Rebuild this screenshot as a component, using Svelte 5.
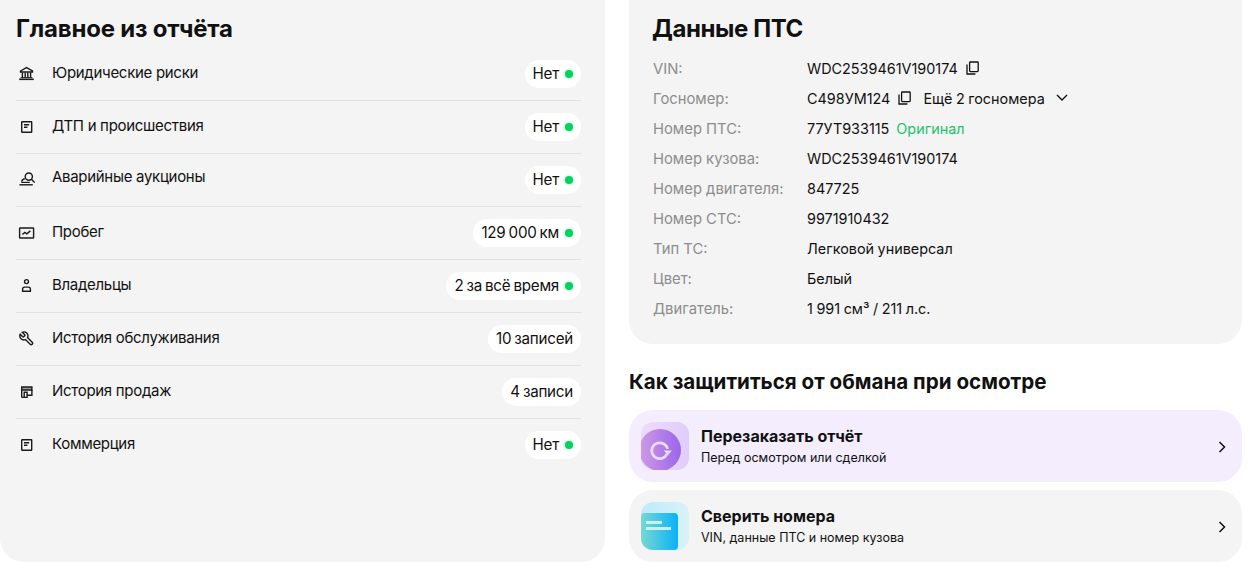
<script>
	const rows = [
		{ icon: 'bank', label: 'Юридические риски', value: 'Нет', dot: true },
		{ icon: 'doc', label: 'ДТП и происшествия', value: 'Нет', dot: true },
		{ icon: 'gavel', label: 'Аварийные аукционы', value: 'Нет', dot: true, lift: true },
		{ icon: 'chart', label: 'Пробег', value: '129 000 км', dot: true },
		{ icon: 'user', label: 'Владельцы', value: '2 за всё время', dot: true },
		{ icon: 'wrench', label: 'История обслуживания', value: '10 записей', dot: false },
		{ icon: 'shop', label: 'История продаж', value: '4 записи', dot: false },
		{ icon: 'doc', label: 'Коммерция', value: 'Нет', dot: true }
	];

	const specs = [
		['VIN:', 'WDC2539461V190174'],
		['Госномер:', 'С498УМ124'],
		['Номер ПТС:', '77УТ933115'],
		['Номер кузова:', 'WDC2539461V190174'],
		['Номер двигателя:', '847725'],
		['Номер СТС:', '9971910432'],
		['Тип ТС:', 'Легковой универсал'],
		['Цвет:', 'Белый'],
		['Двигатель:', '1 991 см³ / 211 л.с.']
	];
</script>

{#snippet copyIcon()}
	<svg class="copy" width="13" height="14" viewBox="0 0 13 14" fill="none" stroke="#111" stroke-width="1.3">
		<rect x="3.6" y="1" width="8.6" height="9.6" rx="0.8" />
		<path d="M1 3.5V13h8.4" />
	</svg>
{/snippet}

{#snippet rowIcon(name)}
	<svg width="17" height="16" viewBox="0 0 17 16" fill="none" stroke="#1a1a1a" stroke-width="1.4">
		{#if name === 'bank'}
			<path d="M2.5 5 8.5 1.6l6 3.4v1h-12z" />
			<path d="M4.4 6.5v4.8M7.2 6.5v4.8M9.8 6.5v4.8M12.6 6.5v4.8" />
			<path d="M2.6 11.6h11.8" stroke-width="1" />
			<path d="M1.2 13.3h14.6" stroke-width="1.6" />
		{:else if name === 'doc'}
			<rect x="3.7" y="2.7" width="10" height="10.6" rx="0.5" />
			<path d="M6 5.8h5.2M6 8.2h3.4" />
		{:else if name === 'gavel'}
			<circle cx="10.8" cy="5.6" r="3.6" />
			<path d="M13.4 8.2l3.2 3.4" />
			<path d="M3.8 10.8c0-1.8 1.2-2.8 3-3" />
			<path d="M3.4 11.4h8.4" stroke-width="1.2" />
			<path d="M1.4 13.8h13.4" stroke-width="1.4" />
		{:else if name === 'chart'}
			<rect x="1.6" y="3" width="14" height="10" rx="0.5" />
			<path d="M4.4 9.6 6.8 7.4l2 1.4 3.6-2.9" />
		{:else if name === 'user'}
			<circle cx="8.5" cy="3.6" r="2" />
			<path d="M4.6 13.3v-2.2c0-1.1.8-2 2-2h3.8c1.2 0 2 .9 2 2v2.2z" />
		{:else if name === 'wrench'}
			<g transform="translate(16.6 -.4) scale(-.67 .67)" stroke-width="2.1">
				<path d="M14.7 6.3a1 1 0 0 0 0 1.4l1.6 1.6a1 1 0 0 0 1.4 0l3.77-3.77a6 6 0 0 1-7.94 7.94l-6.91 6.91a2.12 2.12 0 0 1-3-3l6.91-6.91a6 6 0 0 1 7.94-7.94l-3.76 3.76z" />
			</g>
		{:else if name === 'shop'}
			<path d="M3.7 3h10.2v3H3.7z" fill="#999" />
			<path d="M3.7 6v7.4M13.9 6v5.2H9.4M3.7 13.4h5.4V8.2H6.2v5" />
		{/if}
	</svg>
{/snippet}

<main>
	<section class="summary">
		<h2>Главное из отчёта</h2>
		<ul>
			{#each rows as row}
				<li class:lift={row.lift}>
					<span class="row-icon">{@render rowIcon(row.icon)}</span>
					<span class="row-label">{row.label}</span>
					<span class="pill">
						<span class="pill-text">{row.value}</span>
						{#if row.dot}<i class="dot"></i>{/if}
					</span>
				</li>
			{/each}
		</ul>
	</section>

	<div class="side">
		<section class="pts">
			<h2>Данные ПТС</h2>
			<dl>
				{#each specs as [name, value], i}
					<div class="spec">
						<dt>{name}</dt>
						<dd>
							{value}
							{#if i === 0}
								{@render copyIcon()}
							{:else if i === 1}
								{@render copyIcon()}
								<span class="more">Ещё 2 госномера</span>
								<svg class="chev" width="12" height="8" viewBox="0 0 12 8" fill="none" stroke="#111" stroke-width="1.4"><path d="M1 1l5 5 5-5" /></svg>
							{:else if i === 2}
								<span class="ok">Оригинал</span>
							{/if}
						</dd>
					</div>
				{/each}
			</dl>
		</section>

		<h3>Как защититься от обмана при осмотре</h3>

		<div class="action purple">
			<div class="thumb thumb-purple">
				<div class="disc">
					<svg width="25" height="25" viewBox="0 0 22 22" fill="none" stroke="#ecdcfb" stroke-width="2.4">
						<path d="M16.6 14.2A7 7 0 1 1 14 5.3 7 7 0 0 1 17.4 9.5" />
						<path d="M14 11h7l-3.5 4.5z" fill="#ecdcfb" stroke="none" />
					</svg>
				</div>
			</div>
			<div class="action-text">
				<b>Перезаказать отчёт</b>
				<span>Перед осмотром или сделкой</span>
			</div>
			<svg class="arrow" width="8" height="12" viewBox="0 0 8 12" fill="none" stroke="#111" stroke-width="1.5"><path d="M1.5 1l5 5-5 5" /></svg>
		</div>

		<div class="action">
			<div class="thumb thumb-blue">
				<div class="card-front">
					<i class="line short"></i>
					<i class="line"></i>
				</div>
			</div>
			<div class="action-text">
				<b>Сверить номера</b>
				<span>VIN, данные ПТС и номер кузова</span>
			</div>
			<svg class="arrow" width="8" height="12" viewBox="0 0 8 12" fill="none" stroke="#111" stroke-width="1.5"><path d="M1.5 1l5 5-5 5" /></svg>
		</div>
	</div>
</main>

<style>
	:global(body) {
		background: #fff;
		font-family: Inter, "Noto Sans", sans-serif;
		color: #111;
	}

	main {
		display: flex;
		gap: 24px;
		width: 1242px;
		height: 562px;
		overflow: hidden;
	}

	.summary {
		width: 605px;
		flex: none;
		box-sizing: border-box;
		background: #f4f4f4;
		border-radius: 0 0 24px 24px;
		padding: 14px 24px 0 16px;
	}

	h2 {
		margin: 0;
		font-size: 24px;
		line-height: 30px;
		font-weight: 700;
		letter-spacing: -0.2px;
	}

	.pts h2 {
		letter-spacing: -0.4px;
	}

	ul {
		list-style: none;
		margin: 4px 0 0;
		padding: 0;
	}

	li {
		display: flex;
		align-items: center;
		height: 52px;
		border-bottom: 1px solid #e2e2e2;
		font-size: 15px;
		letter-spacing: -0.3px;
	}

	li:last-child {
		border-bottom: none;
	}

	.row-icon {
		width: 36px;
		flex: none;
		display: flex;
		padding-left: 2px;
		box-sizing: border-box;
	}

	.lift .row-icon {
		padding-bottom: 3px;
	}

	.row-label {
		flex: 1;
		padding-bottom: 4px;
	}

	.lift .row-label {
		padding-bottom: 8px;
	}

	.pill {
		display: flex;
		align-items: center;
		gap: 6px;
		height: 28px;
		padding: 0 8px;
		background: #fff;
		border-radius: 14px;
		font-size: 15.2px;
		letter-spacing: -0.25px;
		word-spacing: -1px;
	}

	.pill-text {
		padding-bottom: 2px;
	}

	.dot {
		width: 8px;
		height: 8px;
		border-radius: 50%;
		background: #00d45f;
		box-shadow: 0 0 3px rgba(0, 212, 95, 0.45);
	}

	.side {
		flex: 1;
		min-width: 0;
	}

	.pts {
		background: #f4f4f4;
		border-radius: 0 0 24px 24px;
		height: 344px;
		box-sizing: border-box;
		padding: 14px 24px 0 23px;
	}

	dl {
		margin: 10px 0 0;
	}

	.spec {
		display: flex;
		align-items: center;
		height: 30px;
		font-size: 14.4px;
	}

	dt {
		width: 154px;
		padding-left: 1px;
		font-size: 14.8px;
		color: #8d8d8d;
	}

	dd {
		margin: 0;
		display: flex;
		align-items: center;
		gap: 7px;
		word-spacing: -0.5px;
		padding-bottom: 2px;
	}

	.copy {
		margin-left: 1px;
	}

	.more {
		margin-left: 5px;
	}

	.chev {
		margin-left: 4px;
	}

	.ok {
		color: #1fc16b;
	}

	h3 {
		margin: 24px 0 14px;
		font-size: 20.6px;
		line-height: 28px;
		font-weight: 700;
	}

	.action {
		display: flex;
		align-items: center;
		height: 72px;
		background: #f4f4f4;
		border-radius: 24px;
		padding: 0 16px 0 12px;
		margin-bottom: 8px;
	}

	.action.purple {
		background: #f3edfd;
	}

	.thumb {
		position: relative;
		width: 48px;
		height: 48px;
		flex: none;
		border-radius: 12px;
		overflow: hidden;
		margin-right: 12px;
	}

	.thumb-purple {
		background: linear-gradient(90deg, #ecdcfb, #e2ccfb);
	}

	.thumb-blue {
		background: linear-gradient(90deg, #bfe9fb, #d8f3f7);
	}

	.disc {
		position: absolute;
		left: -2px;
		top: 7px;
		width: 42px;
		height: 42px;
		border-radius: 50%;
		background: linear-gradient(90deg, #cf9be8, #9a66e8);
		display: flex;
		align-items: center;
		justify-content: center;
	}

	.card-front {
		position: absolute;
		left: 0;
		top: 11px;
		width: 37px;
		height: 37px;
		border-radius: 4px;
		background: linear-gradient(90deg, #78d8d0, #08b2f8);
		display: flex;
		flex-direction: column;
		gap: 3px;
		padding: 8px 5px;
		box-sizing: border-box;
	}

	.line {
		display: block;
		height: 3px;
		width: 25px;
		background: #c8f0f2;
	}

	.line.short {
		width: 16px;
	}

	.action-text {
		flex: 1;
		display: flex;
		flex-direction: column;
		gap: 3px;
	}

	.action-text b {
		font-size: 16px;
		line-height: 20px;
		font-weight: 700;
	}

	.action-text span {
		font-size: 12.5px;
		line-height: 18px;
	}

	.arrow {
		margin-top: 1px;
	}
</style>
